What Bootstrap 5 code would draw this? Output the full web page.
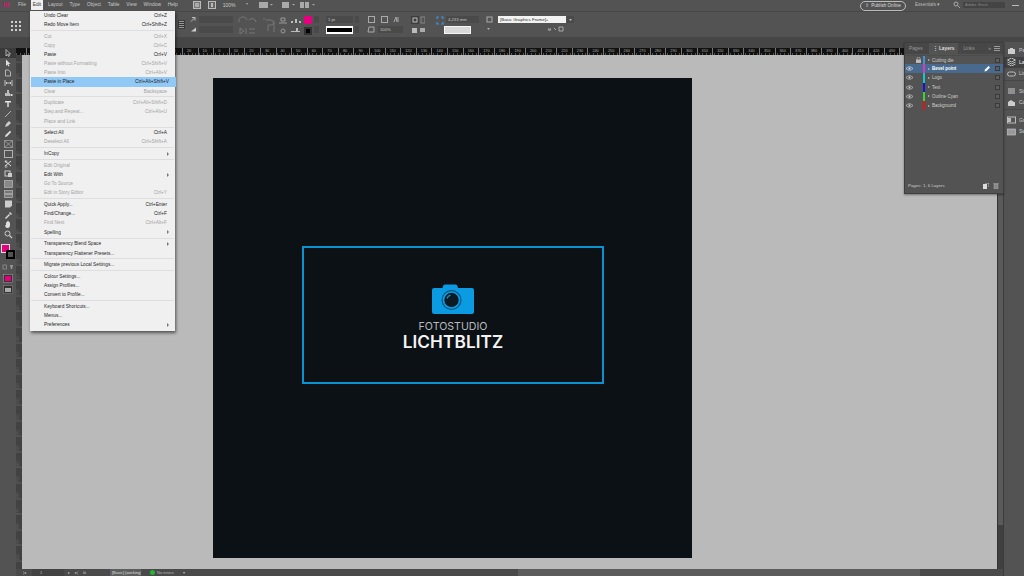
<!DOCTYPE html>
<html lang="en">
<head>
<meta charset="utf-8">
<title>InDesign</title>
<link href="https://cdn.jsdelivr.net/npm/bootstrap@5.3.0/dist/css/bootstrap.min.css" rel="stylesheet">
<style>
html,body{width:1024px;height:576px;overflow:hidden;margin:0;background:#535353;font-family:"Liberation Sans",Arial,sans-serif;font-size:5px;color:#ccc}
svg{display:block;flex:none}
.app{width:1024px;height:576px;position:relative}
.mbar{height:12px;background:#535353;border-bottom:1px solid #474747;line-height:10px;padding-left:3px}
.logo-id{color:#d6126e;font-weight:700;font-size:7px;width:13px}
.mitem{padding:0 2px;height:10px;margin-right:2.8px;font-size:4.9px;color:#c8c8c8}
.mitem.on{background:#f0f0f0;color:#333}
.mpush{width:10px}
.pub{border:1px solid #bbb;border-radius:6px;height:10px;width:46px;margin-top:1px;line-height:8px;font-size:4.6px;color:#ddd;gap:2px}
.ess{width:38px;margin-left:9px;color:#bbb;font-size:4.6px}
.srch{width:42px;height:6px;background:#444;margin:2px 0 0 2px;line-height:6px;color:#888;font-size:4px;padding-left:2px}
.dash{width:7px;height:1px;background:#bbb;margin:5px 0 0 7px}
.endsp{width:5px}
.cbar{height:25px;background:#535353;padding-top:4px;position:relative}
.strip{height:11px;background:#464646}
.refgrid{width:12px;height:12px;margin:4px 0 0 10px;background-image:radial-gradient(#d0d0d0 1px,transparent 1.1px);background-size:4px 4px}
.hspace{width:156px}
.cfield{height:7px;background:#4a4a4a;font-size:4.2px;line-height:7px;color:#c4c4c4;padding-left:2px}
.w4{width:4px}.w5{width:5px}.w9{width:9px}.w25{width:25px}.w27{width:27px}.w33{width:33px}.w34{width:34px}.w68{width:68px}
.l1{margin-left:1px}.l2{margin-left:2px}.l3{margin-left:3px}.l4{margin-left:4px}.l5{margin-left:5px}.l6{margin-left:6px}.l7{margin-left:7px}.l9{margin-left:9px}.l11{margin-left:11px}
.colm{display:flex;flex-direction:column;gap:3px}
.handle{width:7px;height:9px;background:#333;border:1px solid #3b3b3b;margin:4px 5px 0 0;background-image:repeating-linear-gradient(#999 0 1px,transparent 1px 2px)}
.sw{width:8px;height:8px}
.sw-m{background:#e6007e}
.sw-k{background:#000;border:2px solid #333}
.stroke-prev{height:8px;background:#fff;padding:2px 1px}
.stroke-prev i{display:block;height:4px;background:#000}
.wbox{background:#f2f2f2;color:#333;height:7px;line-height:7px;font-size:4.4px;padding-left:2px}
.gbox{background:#d8d8d8;height:8px;border:1px solid #f5f5f5}
.work{height:528px}
.tools{width:16px;background:#535353}
.tool{height:10.1px;display:flex;justify-content:center;align-items:center}
.tool.on{background:#3a3a3a}
.fillbox{width:14px;height:16px;position:relative;margin:4px 0 2px 1px}
.fillbox .f{position:absolute;left:0;top:0;width:9px;height:9px;background:#e6007e;border:1px solid #ddd}
.fillbox .s{position:absolute;left:5px;top:6px;width:9px;height:9px;border:2px solid #000;background:#535353}
.hr{height:7px;background:#111;position:relative;display:flex;overflow:hidden;background-image:repeating-linear-gradient(90deg,#555 0 1px,transparent 1px 3.9px);background-size:100% 2px;background-repeat:repeat-x;background-position:bottom}
.hr span{flex:0 0 15.6px;font-size:3.8px;line-height:6px;color:#aaa;border-left:1px solid #777;padding-left:4px;height:7px}
.rzero{flex:0 0 10px!important;border:0!important;padding:0!important}
.vr{width:6px;background:#111;display:flex;flex-direction:column;overflow:hidden}
.vr span{flex:0 0 15.6px;writing-mode:vertical-rl;transform:rotate(180deg);font-size:3.6px;line-height:5px;color:#aaa;border-bottom:1px solid #777;padding-bottom:3px;text-align:left}
.vz{flex:0 0 7px!important;border:0!important;padding:0!important}
.canvasbox{flex:1;background:#bababa;padding:23px 0 0 191px;min-width:0;overflow:hidden}
.artb{width:479px;height:480px;background:#0b1115;padding:168px 0 0 89px}
.frame{width:302px;height:138px;border:2px solid #0a93d0;padding-top:36px}
.cam1{font-family:Inter,"Liberation Sans",sans-serif;font-size:10.6px;line-height:12px;color:#b9bcbe;margin-top:7px;font-weight:400}
.cam2{font-family:Inter,"Liberation Sans",sans-serif;font-size:17.2px;line-height:18px;color:#f4f4f4;font-weight:600;letter-spacing:.1px}
.vsb{width:6px;background:#3f3f3f;border-left:1px solid #333}
.vsb i{display:block;height:470px;background:#5a5a5a}
.stbar{height:7px;background:#4a4a4a;font-size:4px;line-height:7px;color:#bbb;position:relative}
.stbar b{font-weight:400}
.thumb{position:absolute;left:502px;width:402px;top:0;height:7px;background:#5c5c5c}
.st-nav{width:16px;padding-left:7px}
.pgf{width:32px;background:#424242;padding-left:8px}
.st-mid{width:46px;padding-left:4px;word-spacing:4px}
.dot{width:5px;height:5px;border-radius:50%;background:#27b434;margin:1px 2px 0 9px}
.prof{background:#5d5d5d;padding:0 2px;width:31px;color:#ddd;height:7px;overflow:hidden}
.st-end{margin-left:9px}
.dock{width:21px;background:#535353;margin-top:-6px;padding-top:3px;border-left:1px solid #3c3c3c;overflow:hidden;position:relative}
.dk{height:11.5px;display:flex;align-items:center;gap:3px;padding-left:3px;font-size:5px;color:#ccc;white-space:nowrap}
.dk.on{background:#414141;color:#eee}
.dksep2{height:6px;border-top:1px solid #474747}
/* menu */
.edit-menu{position:absolute;left:30px;top:11px;width:145px;height:320px;margin:0;padding:0;background:#f0f0f0;border:0;border-radius:0;box-shadow:1px 2px 3px rgba(0,0,0,.55);min-width:0;font-size:5px;--bs-dropdown-link-color:#222}
.edit-menu .dropdown-item{display:flex;justify-content:space-between;height:9.1px;line-height:9.1px;padding:0 8px 0 14px;font-size:4.75px;color:#262626;white-space:nowrap;position:relative}
.edit-menu .dropdown-item.disabled{color:#a3a3a3}
.edit-menu .dropdown-item.sel{background:#90c8f6;color:#222;margin:0 1px;padding:0 7px 0 13px;font-weight:400}
.edit-menu .dropdown-divider{margin:.875px 1px;border-top:1px solid #dedede;opacity:1}
.caretr{width:0;height:0;border-left:2.5px solid #777;border-top:2px solid transparent;border-bottom:2px solid transparent;margin-top:2.6px;margin-right:-2px}
/* layers panel */
.lpanel{position:absolute;left:904px;top:42px;width:100px;height:152px;background:#535353;border:1px solid #3f3f3f;box-shadow:0 1px 2px rgba(0,0,0,.4);display:flex;flex-direction:column}
.ptabs{height:11px;background:#474747;display:flex;font-size:4.8px;line-height:11px;color:#a0a0a0;border:0}
.ptabs .nav-link{padding:0 5px;color:#999;border:0;background:none;border-radius:0;font-size:4.8px;height:11px}
.ptabs .nav-link.active{background:#535353;color:#ddd;font-weight:700;padding:0 4px}
.ptabs .nav-link.t1{padding-left:4px;padding-right:6px}
.pmenu{margin-left:auto;padding-right:3px;gap:3px}
.llist{margin-top:1px;border-radius:0;--bs-list-group-bg:transparent;--bs-list-group-border-width:0}
.lrow{height:9.2px;padding:0;background:transparent;color:#cfcfcf;font-size:4.5px;line-height:9.2px;display:flex;align-items:center;border:0;border-top:.5px solid #4c4c4c}
.lrow.sel{background:#486a8e;color:#fff;font-weight:700}
.eye{width:9px;margin-left:0;display:flex;justify-content:center}
.lk{width:9px;display:flex;justify-content:center}
.cb{width:2px;height:9.2px;margin:0 3px 0 0}
.tw{width:0;height:0;border-left:2px solid #bbb;border-top:1.5px solid transparent;border-bottom:1.5px solid transparent;margin-right:2px}
.lname{flex:1}
.sq{width:5px;height:5px;border:1px solid #3a3a3a;background:#5e5e5e;margin:0 3px 0 4px}
.pen{margin-right:1px}
.pfoot{margin-top:auto;height:14px;font-size:4.4px;color:#ccc;padding:0 3px;align-items:center}
.pfoot svg{margin-left:4px}
.bc-m{background:#d13ec4}.bc-b{background:#3f93dd}.bc-c{background:#10c8d0}.bc-t{background:#1414d8}.bc-g{background:#35d63a}.bc-r{background:#e01414}
</style>
</head>
<body>
<div class="app d-flex flex-column">

<div class="mbar d-flex">
  <div class="logo-id">Id</div>
  <div class="mitem">File</div><div class="mitem on">Edit</div><div class="mitem">Layout</div><div class="mitem">Type</div><div class="mitem">Object</div><div class="mitem">Table</div><div class="mitem">View</div><div class="mitem">Window</div><div class="mitem">Help</div>
  <div class="mpush"></div>
  <svg width="8" height="8" viewBox="0 0 8 8" class="mt-1"><rect x=".5" y=".5" width="7" height="7" fill="#777" stroke="#bbb"/><rect x="2" y="2" width="4" height="4" fill="#aaa"/></svg>
  <svg width="8" height="8" viewBox="0 0 8 8" class="mt-1 l7"><rect x=".5" y=".5" width="7" height="7" fill="#666" stroke="#bbb"/><rect x="3" y="2" width="2" height="4" fill="#bbb"/></svg>
  <div class="l7 text-nowrap">100%</div>
  <svg width="40" height="8" viewBox="0 0 40 8" class="mt-1"><path d="M11 2h2l-1 2z M24 1h9v6h-9z M35 3h3l-1.500 1.500z" fill="#aaa"/></svg>
  <svg width="20" height="8" viewBox="0 0 20 8" class="mt-1 l4"><path d="M3 1h7v6H3z M13 3h3l-1.500 1.500z" fill="#aaa"/></svg>
  <svg width="24" height="8" viewBox="0 0 24 8" class="mt-1"><path d="M1 1h4v6H1z M6 1h4v6H6z M13 3h3l-1.500 1.500z" fill="#aaa"/></svg>
  <div class="ms-auto pub d-flex justify-content-center"><span>&#8679;</span><span>Publish Online</span></div>
  <div class="ess">Essentials &#9662;</div>
  <svg width="8" height="8" viewBox="0 0 8 8" class="mt-1"><circle cx="3" cy="3" r="2" fill="none" stroke="#aaa"/><path d="M4.500 4.500L7 7" stroke="#aaa"/></svg>
  <div class="srch">Adobe Stock</div>
  <div class="dash"></div><div class="endsp"></div>
</div>

<div class="cbar d-flex">
  <div class="refgrid"></div>
  <div class="hspace"></div>
  <div class="handle"></div>
  <div class="colm w9">
    <svg width="7" height="7" viewBox="0 0 7 6"><path d="M1 5L5 1M2 1h3v3" stroke="#bbb" fill="none"/></svg>
    <svg width="7" height="7" viewBox="0 0 7 6"><path d="M1 5L6 1v4z" fill="#ccc"/></svg>
  </div>
  <div class="colm w34"><div class="cfield"></div><div class="cfield"></div></div>
  <svg width="20" height="20" viewBox="0 0 20 20" class="l5"><g fill="none" stroke="#777"><path d="M1 6a4 4 0 0 1 8-2M11 4a4 4 0 0 1 7 2M2 12l4 3-4 3zM8 12v6M11 13h6M11 17h6"/></g></svg>
  <svg width="14" height="20" viewBox="0 0 14 20" class="l4"><path d="M4 4h5a2 2 0 0 1 0 5H6v6M2 2v2M12 5v11" stroke="#777" fill="none"/></svg>
  <svg width="9" height="20" viewBox="0 0 9 20" class="l3"><g fill="none" stroke="#9a9a9a"><path d="M2 2h4v3H2zM0 7h8M2 15a2 2 0 1 0 4 0 2 2 0 1 0-4 0"/></g></svg>
  <svg width="10" height="20" viewBox="0 0 10 20" class="l3"><g fill="#bbb"><rect x="0" y="5" width="2" height="2"/><rect x="4" y="3" width="2" height="4"/><rect x="8" y="5" width="2" height="2"/><rect x="0" y="15" width="9" height="1"/><rect x="5" y="12" width="2" height="3"/></g></svg>
  <div class="colm l3 w9"><div class="sw sw-m"></div><div class="sw sw-k"></div></div>
  <div class="colm l1 w5"><div class="cfield"></div><div class="cfield"></div></div>
  <div class="colm l7 w27"><div class="cfield">1 pt</div><div class="stroke-prev"><i></i></div></div>
  <div class="colm l2 w4"><div class="cfield"></div><div class="cfield"></div></div>
  <div class="colm l6">
    <svg width="40" height="7" viewBox="0 0 40 7"><g fill="none" stroke="#aaa"><rect x="3.500" y=".5" width="6" height="6"/><rect x="16.500" y=".5" width="6" height="6"/><path d="M29 6l2-5 1 5M33 1v5"/></g></svg>
    <div class="d-flex"><svg width="13" height="8" viewBox="0 0 13 8"><path d="M4 1h5v5H3z" fill="none" stroke="#aaa"/></svg><div class="cfield w25">100%</div></div>
  </div>
  <svg width="15" height="20" viewBox="0 0 15 20" class="l5"><rect x="1" y="0" width="8" height="8" fill="#3e3e3e"/><rect x="3" y="2" width="4" height="4" fill="none" stroke="#bbb"/><rect x="11" y="1" width="4" height="6" fill="none" stroke="#888"/><rect x="2" y="12" width="5" height="5" fill="#bbb"/><rect x="10" y="12" width="5" height="4" fill="#aaa"/></svg>
  <svg width="8" height="9" viewBox="0 0 8 9" class="l11"><path d="M1 3V1h2M5 1h2v2M7 6v2H5M3 8H1V6" stroke="#3f93dd" fill="none" stroke-width="1.200"/></svg>
  <div class="colm"><div class="cfield w33 l2">4,233 mm</div><div class="gbox w27"></div></div>
  <svg width="8" height="20" viewBox="0 0 8 20" class="l7"><rect x="1" y="1" width="5" height="5" fill="none" stroke="#aaa"/><path d="M1 12h3l-1.500 2z" fill="#aaa"/></svg>
  <div class="colm l4"><div class="wbox w68 text-nowrap overflow-hidden">[Basic Graphics Frame]+</div>
    <div class="d-flex justify-content-end"><svg width="20" height="7" viewBox="0 0 20 7"><path d="M2 3h3L3.500 5zM8 2l2 2M13 1h4v4h-4z" stroke="#aaa" fill="none"/></svg></div></div>
  <svg width="8" height="7" viewBox="0 0 8 7" class="l1"><rect width="7" height="7" fill="#4a4a4a"/><path d="M2 3h3L3.500 5z" fill="#bbb"/></svg>
</div>
<div class="strip"></div>

<div class="work d-flex flex-grow-1">
  <div class="tools">
    <div class="tool on"><svg width="8" height="8" viewBox="0 0 8 8"><path d="M2 .5v6.500l1.500-1.500 1 2 1-.5-1-2h2z" fill="none" stroke="#ddd" stroke-width=".7"/></svg></div>
    <div class="tool"><svg width="8" height="8" viewBox="0 0 8 8"><path d="M2 .5v6.500l1.500-1.500 1 2 1-.5-1-2h2z" fill="#ddd"/></svg></div>
    <div class="tool"><svg width="8" height="8" viewBox="0 0 8 8"><path d="M1.500 1h3l2 2v4h-5z" fill="none" stroke="#ccc" stroke-width=".8"/></svg></div>
    <div class="tool"><svg width="9" height="8" viewBox="0 0 9 8"><path d="M1 1v6M8 1v6M2 4h5M2 4l1-1M2 4l1 1M7 4L6 3M7 4L6 5" fill="none" stroke="#ddd" stroke-width=".8"/></svg></div>
    <div class="tool"><svg width="9" height="8" viewBox="0 0 9 8"><path d="M1 4h5v3H1zM3 4V1h2v3" fill="#bbb"/><rect x="6.500" y="5" width="2" height="2" fill="#ddd"/></svg></div>
    <div class="tool"><svg width="8" height="8" viewBox="0 0 8 8"><path d="M1 1h6v1.500H4.700V7H3.300V2.500H1z" fill="#e4e4e4"/></svg></div>
    <div class="tool"><svg width="8" height="8" viewBox="0 0 8 8"><path d="M1 7L7 1" stroke="#ccc" stroke-width=".8"/></svg></div>
    <div class="tool"><svg width="8" height="8" viewBox="0 0 8 8"><path d="M1 7l1-3 3-3 2 2-3 3z" fill="#ccc"/></svg></div>
    <div class="tool"><svg width="8" height="8" viewBox="0 0 8 8"><path d="M1 7l.5-2L6 .8 7.200 2 3 6.500z" fill="#ddd"/></svg></div>
    <div class="tool"><svg width="9" height="8" viewBox="0 0 9 8"><path d="M.500.500h8v7h-8zM.500.500l8 7M8.500.500l-8 7" fill="none" stroke="#aaa" stroke-width=".7"/></svg></div>
    <div class="tool"><svg width="9" height="8" viewBox="0 0 9 8"><rect x=".5" y=".5" width="8" height="7" fill="none" stroke="#bbb" stroke-width=".9"/></svg></div>
    <div class="tool"><svg width="9" height="8" viewBox="0 0 9 8"><path d="M1 1l6 5M1 6l6-5" stroke="#ddd" fill="none"/><circle cx="2" cy="6.500" r="1" fill="none" stroke="#ddd" stroke-width=".6"/><circle cx="2" cy="1.500" r="1" fill="none" stroke="#ddd" stroke-width=".6"/></svg></div>
    <div class="tool"><svg width="9" height="8" viewBox="0 0 9 8"><rect x="1" y="1" width="5" height="5" fill="none" stroke="#ccc"/><rect x="4" y="3" width="4" height="4" fill="#ccc"/></svg></div>
    <div class="tool"><svg width="9" height="8" viewBox="0 0 9 8"><rect x=".5" y=".5" width="8" height="7" fill="#888" stroke="#bbb" stroke-width=".7"/></svg></div>
    <div class="tool"><svg width="9" height="8" viewBox="0 0 9 8"><rect x=".5" y=".5" width="8" height="7" fill="#777" stroke="#bbb" stroke-width=".7"/><path d="M1 4h7" stroke="#ccc"/></svg></div>
    <div class="tool"><svg width="9" height="8" viewBox="0 0 9 8"><path d="M1 .5h7v5l-2 2H1z" fill="#ccc"/></svg></div>
    <div class="tool"><svg width="9" height="8" viewBox="0 0 9 8"><path d="M1 7l4-4 1 1-4 4zM5 2l1-1 2 2-1 1z" fill="#ddd"/></svg></div>
    <div class="tool"><svg width="9" height="9" viewBox="0 0 9 9"><path d="M2 5V2.500a.6.600 0 0 1 1 0V4V1.500a.6.600 0 0 1 1 0V4V1.500a.6.600 0 0 1 1 0V4.200V2.500a.6.600 0 0 1 1 0V6a2.500 2.500 0 0 1-4.500 1L1 5.500z" fill="#ddd"/></svg></div>
    <div class="tool"><svg width="9" height="9" viewBox="0 0 9 9"><circle cx="3.500" cy="3.500" r="2.500" fill="none" stroke="#ccc"/><path d="M5.500 5.500L8 8" stroke="#ccc" stroke-width="1.200"/></svg></div>
    <div class="fillbox"><div class="f"></div><div class="s"></div></div>
    <div class="tool"><svg width="12" height="6" viewBox="0 0 12 6"><rect x="1" y="1" width="3.500" height="4" fill="none" stroke="#999" stroke-width=".7"/><path d="M8 1h3l-1 4H9z" fill="#999"/></svg></div>
    <div class="tool mt-1"><svg width="10" height="9" viewBox="0 0 10 9"><rect x=".5" y=".5" width="9" height="8" fill="#333" stroke="#aaa" stroke-width=".5"/><rect x="2" y="2" width="6" height="5" fill="#e6007e"/></svg></div>
    <div class="tool mt-1"><svg width="10" height="9" viewBox="0 0 10 9"><rect x=".5" y=".5" width="9" height="8" fill="#333" stroke="#888" stroke-width=".5"/><rect x="2" y="3" width="6" height="4" fill="#aaa"/></svg></div>
  </div>

  <div class="d-flex flex-column flex-grow-1" style="min-width:0">
    <div class="hr" id="hruler"><span class="rzero"></span></div>
    <div class="d-flex flex-grow-1" style="min-height:0">
      <div class="vr" id="vruler"><span class="vz"></span></div>
      <div class="canvasbox">
        <div class="artb">
          <div class="frame d-flex flex-column align-items-center">
            <svg width="42" height="30" viewBox="0 0 42 30">
              <path d="M2 4h8.500l.5-2Q11.500.5 13 .5h10.500Q25 .5 25.500 2L26 4H40q2 0 2 2v22q0 2-2 2H2q-2 0-2-2V6q0-2 2-2z" fill="#0a9be2"/>
              <circle cx="19.500" cy="16" r="10" fill="#0b4a6c"/><circle cx="19.500" cy="16" r="9" fill="#0a9be2"/><circle cx="19.500" cy="16" r="7.200" fill="#0d1a22"/>
              <path d="M15 14.500a5 5 0 0 1 3.500-3.300" stroke="#0a9be2" stroke-width="1.200" fill="none"/>
            </svg>
            <div class="cam1">FOTOSTUDIO</div>
            <div class="cam2">LICHTBLITZ</div>
          </div>
        </div>
      </div>
      <div class="vsb"><i></i></div>
    </div>
    <div class="stbar d-flex text-nowrap">
      <div class="thumb"></div>
      <span class="st-nav">|&#9666;</span>
      <span class="pgf">1</span>
      <span class="st-mid">&#9656; &#9656;| &#10697;</span>
      <span class="prof">[Basic] (working)</span>
      <span class="dot"></span><b>No errors</b>
      <span class="st-end">&#9662;</span>
    </div>
  </div>

  <div class="dock">
    <div class="dk"><svg width="9" height="8" viewBox="0 0 9 8"><path d="M1 2h2V1h3v1h2v5H1z" fill="#ccc"/></svg>Pages</div>
    <div class="dk on"><svg width="9" height="8" viewBox="0 0 9 8"><path d="M4.500 0l4 2-4 2-4-2zM.5 4l4 2 4-2M.5 6l4 2 4-2" fill="none" stroke="#ddd" stroke-width=".8"/></svg>Layers</div>
    <div class="dk"><svg width="9" height="8" viewBox="0 0 9 8"><rect x=".5" y="2" width="8" height="4" rx="2" fill="none" stroke="#bbb"/></svg>Links</div>
    <div class="dksep2"></div>
    <div class="dk"><svg width="9" height="8" viewBox="0 0 9 8"><path d="M1 2h7M1 4h7M1 6h7" stroke="#ccc"/></svg>Stroke</div>
    <div class="dk"><svg width="9" height="8" viewBox="0 0 9 8"><path d="M1 6V3l3-2 3 2h1v4H1z" fill="#ccc"/></svg>Colour</div>
    <div class="dksep2"></div>
    <div class="dk"><svg width="9" height="8" viewBox="0 0 9 8"><rect x=".5" y="1" width="8" height="6" fill="none" stroke="#bbb"/><rect x="1" y="2" width="3" height="4" fill="#bbb"/></svg>Gradient</div>
    <div class="dk"><svg width="9" height="8" viewBox="0 0 9 8"><rect x=".5" y="1" width="8" height="6" fill="#999" stroke="#ccc" stroke-width=".6"/></svg>Swatches</div>
  </div>
</div>

<div class="lpanel">
  <ul class="nav ptabs">
    <li class="nav-item"><a class="nav-link t1" href="#">Pages</a></li>
    <li class="nav-item"><a class="nav-link active" href="#">&#8942; Layers</a></li>
    <li class="nav-item"><a class="nav-link" href="#">Links</a></li>
    <li class="pmenu d-flex align-items-center"><span>&raquo;</span><svg width="6" height="5" viewBox="0 0 6 5"><path d="M0 .5h6M0 2.500h6M0 4.500h6" stroke="#999"/></svg></li>
  </ul>
  <div class="list-group llist">
    <div class="list-group-item lrow"><span class="eye"></span><span class="lk"><svg width="5" height="6" viewBox="0 0 5 6"><path d="M1 3V1.500a1.500 1.500 0 0 1 3 0V3" fill="none" stroke="#bbb" stroke-width=".7"/><rect y="2.500" width="5" height="3.500" fill="#bbb"/></svg></span><span class="cb bc-b"></span><span class="tw"></span><span class="lname">Cutting die</span><span class="sq"></span></div>
    <div class="list-group-item lrow sel"><span class="eye"><svg width="7" height="5" viewBox="0 0 7 5"><path d="M0 2.500Q3.500-1 7 2.500Q3.500 6 0 2.500z" fill="none" stroke="#ddd" stroke-width=".7"/><circle cx="3.500" cy="2.500" r="1" fill="#ddd"/></svg></span><span class="lk"></span><span class="cb bc-m"></span><span class="tw"></span><span class="lname">Bevel point</span><svg class="pen" width="6" height="6" viewBox="0 0 6 6"><path d="M.5 5.500l.5-2L4.500 0 6 1.500 2.500 5z" fill="#fff"/></svg><span class="sq"></span></div>
    <div class="list-group-item lrow"><span class="eye"><svg width="7" height="5" viewBox="0 0 7 5"><path d="M0 2.500Q3.500-1 7 2.500Q3.500 6 0 2.500z" fill="none" stroke="#ccc" stroke-width=".7"/><circle cx="3.500" cy="2.500" r="1" fill="#ccc"/></svg></span><span class="lk"></span><span class="cb bc-c"></span><span class="tw"></span><span class="lname">Logo</span><span class="sq"></span></div>
    <div class="list-group-item lrow"><span class="eye"><svg width="7" height="5" viewBox="0 0 7 5"><path d="M0 2.500Q3.500-1 7 2.500Q3.500 6 0 2.500z" fill="none" stroke="#ccc" stroke-width=".7"/><circle cx="3.500" cy="2.500" r="1" fill="#ccc"/></svg></span><span class="lk"></span><span class="cb bc-t"></span><span class="tw"></span><span class="lname">Text</span><span class="sq"></span></div>
    <div class="list-group-item lrow"><span class="eye"><svg width="7" height="5" viewBox="0 0 7 5"><path d="M0 2.500Q3.500-1 7 2.500Q3.500 6 0 2.500z" fill="none" stroke="#ccc" stroke-width=".7"/><circle cx="3.500" cy="2.500" r="1" fill="#ccc"/></svg></span><span class="lk"></span><span class="cb bc-g"></span><span class="tw"></span><span class="lname">Outline Cyan</span><span class="sq"></span></div>
    <div class="list-group-item lrow"><span class="eye"><svg width="7" height="5" viewBox="0 0 7 5"><path d="M0 2.500Q3.500-1 7 2.500Q3.500 6 0 2.500z" fill="none" stroke="#ccc" stroke-width=".7"/><circle cx="3.500" cy="2.500" r="1" fill="#ccc"/></svg></span><span class="lk"></span><span class="cb bc-r"></span><span class="tw"></span><span class="lname">Background</span><span class="sq"></span></div>
  </div>
  <div class="pfoot d-flex"><span class="me-auto">Pages: 1, 6 Layers</span><svg width="6" height="6" viewBox="0 0 6 6"><path d="M0 1h4v5H0z" fill="#ddd"/><path d="M2 0h4v4" fill="none" stroke="#ddd" stroke-width=".7"/></svg><svg class="me-1" width="6" height="6" viewBox="0 0 6 6"><path d="M1 1h4v5H1zM0 .5h6" fill="#888" stroke="#aaa" stroke-width=".5"/></svg></div>
</div>

<div class="dropdown-menu show edit-menu">
  <a class="dropdown-item" href="#"><span>Undo Clear</span><span>Ctrl+Z</span></a>
  <a class="dropdown-item" href="#"><span>Redo Move Item</span><span>Ctrl+Shift+Z</span></a>
  <hr class="dropdown-divider">
  <a class="dropdown-item disabled" href="#"><span>Cut</span><span>Ctrl+X</span></a>
  <a class="dropdown-item disabled" href="#"><span>Copy</span><span>Ctrl+C</span></a>
  <a class="dropdown-item" href="#"><span>Paste</span><span>Ctrl+V</span></a>
  <a class="dropdown-item disabled" href="#"><span>Paste without Formatting</span><span>Ctrl+Shift+V</span></a>
  <a class="dropdown-item disabled" href="#"><span>Paste Into</span><span>Ctrl+Alt+V</span></a>
  <a class="dropdown-item sel" href="#"><span>Paste in Place</span><span>Ctrl+Alt+Shift+V</span></a>
  <a class="dropdown-item disabled" href="#"><span>Clear</span><span>Backspace</span></a>
  <hr class="dropdown-divider">
  <a class="dropdown-item disabled" href="#"><span>Duplicate</span><span>Ctrl+Alt+Shift+D</span></a>
  <a class="dropdown-item disabled" href="#"><span>Step and Repeat...</span><span>Ctrl+Alt+U</span></a>
  <a class="dropdown-item disabled" href="#"><span>Place and Link</span></a>
  <hr class="dropdown-divider">
  <a class="dropdown-item" href="#"><span>Select All</span><span>Ctrl+A</span></a>
  <a class="dropdown-item disabled" href="#"><span>Deselect All</span><span>Ctrl+Shift+A</span></a>
  <hr class="dropdown-divider">
  <a class="dropdown-item" href="#"><span>InCopy</span><i class="caretr"></i></a>
  <hr class="dropdown-divider">
  <a class="dropdown-item disabled" href="#"><span>Edit Original</span></a>
  <a class="dropdown-item" href="#"><span>Edit With</span><i class="caretr"></i></a>
  <a class="dropdown-item disabled" href="#"><span>Go To Source</span></a>
  <a class="dropdown-item disabled" href="#"><span>Edit in Story Editor</span><span>Ctrl+Y</span></a>
  <hr class="dropdown-divider">
  <a class="dropdown-item" href="#"><span>Quick Apply...</span><span>Ctrl+Enter</span></a>
  <a class="dropdown-item" href="#"><span>Find/Change...</span><span>Ctrl+F</span></a>
  <a class="dropdown-item disabled" href="#"><span>Find Next</span><span>Ctrl+Alt+F</span></a>
  <a class="dropdown-item" href="#"><span>Spelling</span><i class="caretr"></i></a>
  <hr class="dropdown-divider">
  <a class="dropdown-item" href="#"><span>Transparency Blend Space</span><i class="caretr"></i></a>
  <a class="dropdown-item" href="#"><span>Transparency Flattener Presets...</span></a>
  <hr class="dropdown-divider">
  <a class="dropdown-item" href="#"><span>Migrate previous Local Settings...</span></a>
  <hr class="dropdown-divider">
  <a class="dropdown-item" href="#"><span>Colour Settings...</span></a>
  <a class="dropdown-item" href="#"><span>Assign Profiles...</span></a>
  <a class="dropdown-item" href="#"><span>Convert to Profile...</span></a>
  <hr class="dropdown-divider">
  <a class="dropdown-item" href="#"><span>Keyboard Shortcuts...</span></a>
  <a class="dropdown-item" href="#"><span>Menus...</span></a>
  <a class="dropdown-item" href="#"><span>Preferences</span><i class="caretr"></i></a>
</div>

</div>
<script src="https://cdn.jsdelivr.net/npm/bootstrap@5.3.0/dist/js/bootstrap.bundle.min.js"></script>
<script>
var h=document.getElementById('hruler'),v=document.getElementById('vruler');
for(var i=-12;i<=44;i++){var s=document.createElement('span');s.textContent=Math.abs(i)*10;h.appendChild(s);}
for(var j=-1;j<=31;j++){var t=document.createElement('span');t.textContent=Math.abs(j)*10;v.appendChild(t);}
</script>
</body>
</html>
